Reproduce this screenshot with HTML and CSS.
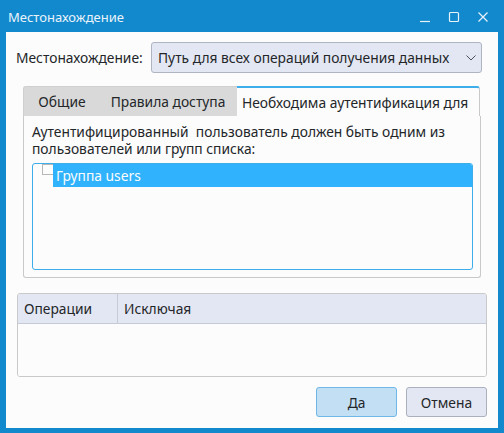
FILE: index.html
```html
<!DOCTYPE html>
<html lang="ru">
<head>
<meta charset="utf-8">
<title>Местонахождение</title>
<link rel="stylesheet" href="styles.css">
</head>
<body>
<div class="window">
  <div class="titlebar">
    <span class="title">Местонахождение</span>
    <div class="wbtns">
      <svg class="wbtn" width="12" height="12" viewBox="0 0 12 12"><path d="M1 10.5H11" stroke="#e8f2fa" stroke-width="1.2" fill="none"/></svg>
      <svg class="wbtn" width="12" height="12" viewBox="0 0 12 12"><rect x="1.5" y="1.5" width="9" height="9" rx="1" stroke="#e8f2fa" stroke-width="1.2" fill="none"/></svg>
      <svg class="wbtn" width="12" height="12" viewBox="0 0 12 12"><path d="M1.5 1.5L10.5 10.5M10.5 1.5L1.5 10.5" stroke="#e8f2fa" stroke-width="1.2" fill="none"/></svg>
    </div>
  </div>
  <div class="content">
    <div class="locrow">
      <span class="loclabel">Местонахождение:</span>
      <div class="combo">
        <span>Путь для всех операций получения данных</span>
        <svg width="12" height="8" viewBox="0 0 12 8"><path d="M1.5 1.5L6 6L10.5 1.5" stroke="#4a4f58" stroke-width="1" fill="none"/></svg>
      </div>
    </div>
    <div class="tabs">
      <div class="tabbar">
        <div class="tab t1">Общие</div>
        <div class="tab t2">Правила доступа</div>
        <div class="tab t3 active">Необходима аутентификация для</div>
      </div>
      <div class="pane">
        <p class="desc">Аутентифицированный&nbsp; пользователь должен быть одним из пользователей или групп списка:</p>
        <div class="tree">
          <div class="treerow">
            <span class="branch"></span>
            <span class="item">Группа users</span>
          </div>
        </div>
      </div>
    </div>
    <div class="table">
      <div class="thead">
        <div class="th c1">Операции</div>
        <div class="th c2">Исключая</div>
      </div>
      <div class="tbody"></div>
    </div>
    <div class="buttons">
      <div class="btn primary">Да</div>
      <div class="btn">Отмена</div>
    </div>
  </div>
</div>
</body>
</html>
```
FILE: styles.css
```css
html, body {
  margin: 0;
  padding: 0;
}
body {
  width: 504px;
  height: 433px;
  overflow: hidden;
  font-family: "Noto Sans", "DejaVu Sans", sans-serif;
  font-size: 13.8px;
  color: #232629;
}
.window {
  width: 504px;
  height: 433px;
  background: #1389cd;
  display: flex;
  flex-direction: column;
  box-sizing: border-box;
  padding: 0 6px 5px 6px;
}
.titlebar {
  height: 32px;
  display: flex;
  align-items: center;
  flex: none;
}
.title {
  color: #eaf3fa;
  font-size: 13px;
  margin-left: 2px;
  margin-top: 1px;
}
.wbtns {
  margin-left: auto;
  display: flex;
  gap: 17px;
  margin-right: 9px;
  margin-top: 2px;
}
.wbtn { display: block; }
.content {
  flex: 1;
  background: #fcfcfc;
  display: flex;
  flex-direction: column;
  padding: 10px 11px 11px 11px;
}
.locrow {
  display: flex;
  align-items: center;
  height: 31px;
}
.loclabel {
  margin-left: -1px;
  white-space: nowrap;
}
.combo {
  margin-left: auto;
  margin-right: 5px;
  width: 331px;
  height: 31px;
  box-sizing: border-box;
  background: #e3e7f3;
  border: 1px solid #aeb4c2;
  border-radius: 3px;
  display: flex;
  align-items: center;
  padding: 0 4px 0 6px;
  justify-content: space-between;
  white-space: nowrap;
}
.tabs {
  margin: 13px 6px 0 6px;
}
.tabbar {
  display: flex;
  height: 30px;
}
.tab {
  display: flex;
  align-items: center;
  justify-content: center;
  box-sizing: border-box;
  background: #d9d9d9;
  border-top: 1px solid #cfcfcf;
  white-space: nowrap;
}
.t1 { width: 72px; border-top-left-radius: 3px; border-left: 1px solid #cfcfcf; padding-left: 5px; }
.t2 { width: 142px; padding-left: 4px; }
.t3 { width: 243px; }
.tab.active {
  background: #fcfcfc;
  border-top: 2px solid #3daee9;
  border-right: 1px solid #c9c9c9;
  border-top-right-radius: 3px;
  justify-content: flex-start;
  padding-left: 5px;
  overflow: hidden;
}
.pane {
  height: 162px;
  box-sizing: border-box;
  border: 1px solid #c9c9c9;
  border-top: none;
  border-radius: 0 0 3px 3px;
  padding: 7px 7px 7px 8px;
  display: flex;
  flex-direction: column;
}
.desc {
  margin: 0;
  line-height: 17px;
}
.tree {
  margin-top: 6px;
  flex: 1;
  border: 1px solid #3daee9;
  border-radius: 3px;
  background: #fcfcfc;
}
.treerow {
  display: flex;
  height: 23px;
}
.branch {
  width: 11px;
  height: 11px;
  margin-left: 9px;
  border: 1px solid #b7b7b7;
  border-right: none;
  box-sizing: border-box;
}
.item {
  flex: 1;
  background: #30b3fc;
  color: #fcfcfc;
  display: flex;
  align-items: center;
  padding-left: 3px;
  border-top-right-radius: 2px;
}
.table {
  margin-top: 15px;
  height: 84px;
  box-sizing: border-box;
  border: 1px solid #c9c9c9;
  border-radius: 3px;
  display: flex;
  flex-direction: column;
  overflow: hidden;
}
.thead {
  display: flex;
  height: 29px;
  background: #e3e7f3;
  border-bottom: 1px solid #c6cad6;
  flex: none;
}
.th {
  display: flex;
  align-items: center;
  padding-left: 6px;
}
.c1 { width: 93px; border-right: 1px solid #c6cad6; }
.tbody { flex: 1; background: #fcfcfc; }
.buttons {
  margin-top: 10px;
  display: flex;
  justify-content: flex-end;
  gap: 9px;
}
.btn {
  width: 81px;
  height: 30px;
  box-sizing: border-box;
  border: 1px solid #aab0bd;
  border-radius: 3px;
  background: #e3e7f3;
  display: flex;
  align-items: center;
  justify-content: center;
}
.btn.primary {
  background: #c3dff4;
  border-color: #6fb7e6;
}
```
